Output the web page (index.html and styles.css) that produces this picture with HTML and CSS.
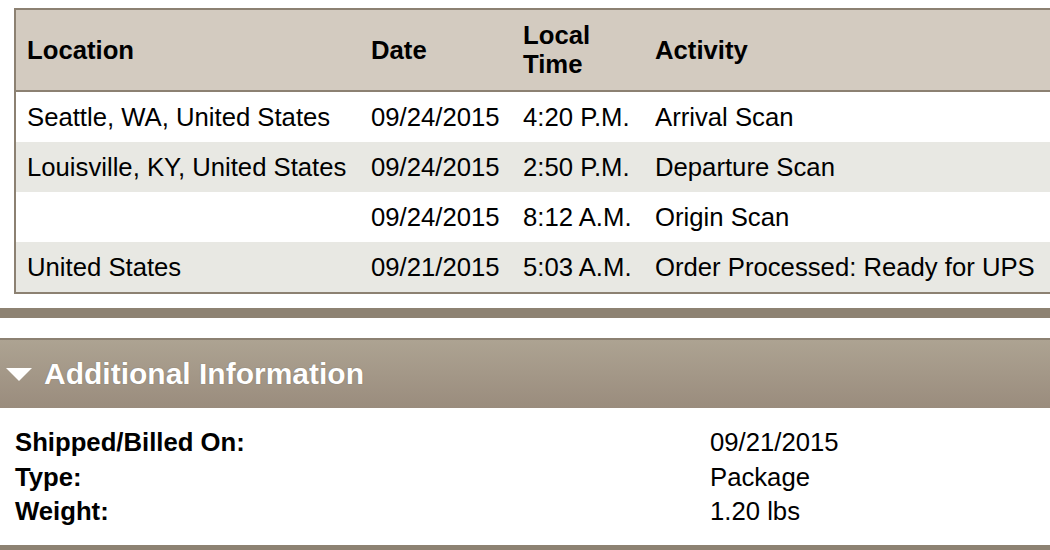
FILE: index.html
```html
<!DOCTYPE html>
<html>
<head>
<meta charset="utf-8">
<link rel="stylesheet" href="styles.css">
</head>
<body>
<table class="activity">
  <colgroup>
    <col class="c-loc"><col class="c-date"><col class="c-time"><col>
  </colgroup>
  <thead>
    <tr><th>Location</th><th>Date</th><th>Local<br>Time</th><th>Activity</th></tr>
  </thead>
  <tbody>
    <tr><td>Seattle, WA, United States</td><td>09/24/2015</td><td>4:20 P.M.</td><td>Arrival Scan</td></tr>
    <tr class="alt"><td>Louisville, KY, United States</td><td>09/24/2015</td><td>2:50 P.M.</td><td>Departure Scan</td></tr>
    <tr><td></td><td>09/24/2015</td><td>8:12 A.M.</td><td>Origin Scan</td></tr>
    <tr class="alt"><td>United States</td><td>09/21/2015</td><td>5:03 A.M.</td><td>Order Processed: Ready for UPS</td></tr>
  </tbody>
</table>
<div class="bar"></div>
<section class="info">
  <h2 class="info-head">
    <svg class="tri" width="26" height="13" viewBox="0 0 26 13"><polygon points="0,0 26,0 13,13" fill="#fff"/></svg>
    Additional Information
  </h2>
  <dl class="info-body">
    <dt>Shipped/Billed On:</dt><dd>09/21/2015</dd>
    <dt>Type:</dt><dd>Package</dd>
    <dt>Weight:</dt><dd>1.20 lbs</dd>
  </dl>
</section>
<div class="bar bottom"></div>
</body>
</html>
```
FILE: styles.css
```css
html, body {
  margin: 0;
  padding: 0;
  background: #fff;
  overflow: hidden;
}
body {
  font-family: "Liberation Sans", Arial, sans-serif;
  font-size: 25.7px;
  color: #000;
  width: 1050px;
}
.activity {
  margin: 8px 0 0 14px;
  width: 1050px;
  table-layout: fixed;
  border-collapse: separate;
  border-spacing: 0;
  border: 2px solid #8c8172;
  border-right: none;
}
.c-loc { width: 344px; }
.c-date { width: 152px; }
.c-time { width: 132px; }
.activity th {
  background: #d3cbc0;
  text-align: left;
  font-weight: bold;
  line-height: 29px;
  height: 58px;
  padding: 11px 11px;
  border-bottom: 2px solid #8c8172;
  vertical-align: middle;
}
.activity td {
  height: 50px;
  padding: 0 11px;
  white-space: nowrap;
  vertical-align: middle;
  line-height: 30px;
}
.activity tr.alt td { background: #e8e8e3; }
.bar {
  height: 10px;
  background: #8d8272;
  margin-top: 14px;
}
.bar.bottom { margin-top: 0; height: 12px; }
.info { margin-top: 20px; }
.info-head {
  margin: 0;
  height: 68px;
  border-top: 2px solid #8c8172;
  background: linear-gradient(#ada392, #9a8c7d);
  display: flex;
  align-items: center;
  gap: 12px;
  padding-left: 6px;
  color: #fff;
  font-size: 30px;
  font-weight: bold;
  text-shadow: 0 0 1px rgba(60, 50, 40, 0.5);
}
.tri { flex: none; margin-top: 1px; }
.info-body {
  margin: 0;
  padding: 17px 0 16px 15px;
  display: grid;
  grid-template-columns: 695px 1fr;
  line-height: 34.5px;
}
.info-body dt { font-weight: bold; }
.info-body dd { margin: 0; }
```
